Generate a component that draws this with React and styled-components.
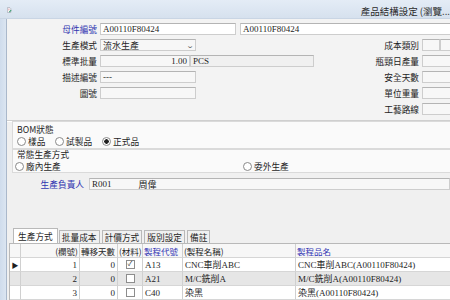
import React from "react";
import styled, { createGlobalStyle } from "styled-components";

const Global = createGlobalStyle`
  html, body { margin: 0; padding: 0; width: 450px; height: 300px; overflow: hidden; background: #f0f0f0; }
  body { font-family: "Liberation Serif", "Noto Sans CJK TC", serif; font-size: 9px; color: #1e1e1e; }
  #root { width: 450px; height: 300px; }
`;

const Win = styled.div`
  width: 450px;
  height: 300px;
  display: flex;
  flex-direction: column;
  overflow: hidden;
`;

const TitleBar = styled.div`
  height: 18px;
  flex: none;
  display: flex;
  align-items: center;
  padding-left: 7px;
  background: linear-gradient(#e4ecf6, #d6e1ee);
  border-bottom: 1px solid #c9d5e4;
`;

const Title = styled.span`
  margin-left: 349px;
  white-space: nowrap;
  font-family: "Noto Sans CJK TC", sans-serif;
  font-size: 9.5px;
  color: #2a2a2a;
  margin-top: 4px;
`;

const Body = styled.div`
  flex: 1;
  display: flex;
  min-height: 0;
`;

const Frame = styled.div`
  width: 6px;
  flex: none;
  background: linear-gradient(90deg, #cfdcec, #dbe5f1);
  border-right: 1px solid #aab8cb;
`;

const Content = styled.div`
  flex: 1;
  min-width: 0;
  display: flex;
  flex-direction: column;
  overflow: hidden;
  background: #f0f0f0;
`;

const TopPanel = styled.div`
  display: grid;
  grid-template-columns: 90px 245px 71px 60px;
  grid-auto-rows: 16px;
  column-gap: 3px;
  padding: 2px 0 3px;
  background: #f3f3f3;
  border-bottom: 1px solid #cfcfcf;
  box-shadow: 0 1px 0 #fff;
`;

const Label = styled.div`
  display: flex;
  align-items: center;
  justify-content: flex-end;
  white-space: nowrap;
  font-family: "Noto Sans CJK TC", sans-serif;
  font-size: 8.7px;
  color: ${(p) => (p.blue ? "#2f35b0" : "#1e1e1e")};
  grid-column: ${(p) => p.col || "auto"};
  grid-row: ${(p) => p.row || "auto"};
`;

const Cell = styled.div`
  display: flex;
  align-items: center;
  gap: ${(p) => p.gap || 0}px;
  grid-column: ${(p) => p.col || "auto"};
  grid-row: ${(p) => p.row || "auto"};
`;

const Field = styled.div`
  height: 12px;
  width: ${(p) => (p.w ? p.w + "px" : "auto")};
  flex: ${(p) => (p.grow ? 1 : "none")};
  display: flex;
  align-items: center;
  justify-content: ${(p) => (p.right ? "flex-end" : "flex-start")};
  padding: 0 2px;
  box-sizing: border-box;
  border: 1px solid #cdcdcd;
  border-top-color: #b4b4b4;
  background: ${(p) => p.bg || "#fff"};
  white-space: nowrap;
  overflow: hidden;
`;

const Chevron = styled.span`
  margin-left: auto;
  font-size: 7px;
  color: #555;
  transform: scaleX(1.4);
`;

const Group = styled.div`
  margin-left: 5px;
  padding: ${(p) => p.pad || "3px 4px 2px"};
  background: #fafafa;
  border: 1px solid #dadada;
  border-right: none;
  font-family: "Noto Sans CJK TC", sans-serif;
  font-size: 8.7px;
`;

const GroupTitle = styled.div`
  height: ${(p) => p.h || 11}px;
  line-height: ${(p) => p.h || 11}px;
`;

const RadioRow = styled.div`
  display: flex;
  align-items: center;
  height: 12px;
`;

const Radio = styled.span`
  display: flex;
  align-items: center;
  gap: 2px;
  width: ${(p) => p.w}px;
  flex: none;
  white-space: nowrap;
  &::before {
    content: "";
    width: 7px;
    height: 7px;
    border-radius: 50%;
    border: 1px solid #8a8a8a;
    background: ${(p) =>
      p.on ? "radial-gradient(circle, #222 0 2px, #fff 2.5px)" : "#fff"};
  }
`;

const OwnerRow = styled.div`
  display: flex;
  align-items: center;
  gap: 5px;
  height: 16px;
  margin-top: 3px;
`;

const OwnerLabel = styled(Label)`
  width: 77px;
  flex: none;
`;

const OwnerName = styled.span`
  margin-left: 27px;
  font-family: "Noto Sans CJK TC", sans-serif;
`;

const Tabs = styled.div`
  margin-top: auto;
  display: flex;
  align-items: flex-end;
  padding-left: 6px;
  height: 15px;
  font-family: "Noto Sans CJK TC", sans-serif;
  font-size: 8.7px;
`;

const Tab = styled.div`
  height: ${(p) => (p.active ? 15 : 13)}px;
  padding: 0 ${(p) => (p.active ? 4 : 2)}px;
  margin-right: ${(p) => (p.active ? 1 : 2)}px;
  display: flex;
  align-items: center;
  box-sizing: border-box;
  border: 1px solid #b9b9b9;
  border-bottom: none;
  background: ${(p) => (p.active ? "#fff" : "#f0f0f0")};
  white-space: nowrap;
`;

const Grid = styled.div`
  display: grid;
  grid-template-columns: 11px 59px 38px 25px 40px 113px 200px;
  grid-auto-rows: 14px;
  margin-left: 2px;
  border-top: 1px solid #b9b9b9;
  border-left: 1px solid #b9b9b9;
  background: #fff;
`;

const GCell = styled.div`
  display: flex;
  align-items: center;
  justify-content: ${(p) => p.align || "flex-start"};
  padding: 0 ${(p) => (p.head ? 1 : 2)}px;
  border-right: 1px solid #d0d0d0;
  border-bottom: 1px solid #d6d6d6;
  background: ${(p) => (p.head ? "#f7f7f7" : p.alt ? "#e6e6e6" : "#fff")};
  color: ${(p) => (p.blue ? "#3236b4" : "#1e1e1e")};
  white-space: nowrap;
  overflow: hidden;
  font-size: ${(p) => (p.head ? 8.5 : 9)}px;
  font-family: ${(p) =>
    p.head ? '"Noto Sans CJK TC", sans-serif' : '"Liberation Serif", "Noto Sans CJK TC", serif'};
`;

const Check = styled.span`
  width: 7px;
  height: 7px;
  border: 1px solid #8d8d8d;
  background: #fff;
  font-size: 7px;
  line-height: 7px;
  text-align: center;
  color: #333;
`;

function DocIcon() {
  return (
    <svg width="11" height="12" viewBox="0 0 11 12" style={{ marginTop: 2 }}>
      <path d="M1 0.5h5.5l2.5 2.5v8.5h-8z" fill="#fff" stroke="#7b7b8c" />
      <path d="M2.5 4h4M2.5 6h3" stroke="#d66a7a" strokeWidth="1" />
      <path d="M5 9.5l4-4 1.5 1.5-4 4h-1.5z" fill="#2e9a6a" />
    </svg>
  );
}

const rows = [
  { n: 1, code: "A13", name: "CNC車削ABC", full: "CNC車削ABC(A00110F80424)", on: true },
  { n: 2, code: "A21", name: "M/C銑削A", full: "M/C銑削A(A00110F80424)", on: false },
  { n: 3, code: "C40", name: "染黑", full: "染黑(A00110F80424)", on: false },
];

export default function App() {
  return (
    <Win>
      <Global />
      <TitleBar>
        <DocIcon />
        <Title>產品結構設定 (瀏覽...</Title>
      </TitleBar>
      <Body>
        <Frame />
        <Content>
          <TopPanel>
            <Label blue row="1">母件編號</Label>
            <Cell col="2 / 5" row="1" gap={4}>
              <Field w={136}>A00110F80424</Field>
              <Field grow>A00110F80424</Field>
            </Cell>

            <Label row="2">生產模式</Label>
            <Cell row="2">
              <Field w={96} bg="#f7f7f7" style={{ fontFamily: '"Noto Sans CJK TC", sans-serif' }}>
                流水生產<Chevron>⌄</Chevron>
              </Field>
            </Cell>
            <Label col="3" row="2">成本類別</Label>
            <Cell col="4" row="2">
              <Field w={18} bg="#f7f7f7" />
              <Field w={40} bg="#f7f7f7" />
            </Cell>

            <Label row="3">標準批量</Label>
            <Cell row="3">
              <Field w={90} right bg="#f7f7f7">1.00</Field>
              <Field w={124} bg="#f0f0f0">PCS</Field>
            </Cell>
            <Label col="3" row="3">瓶頸日產量</Label>
            <Cell col="4" row="3"><Field grow bg="#f7f7f7" /></Cell>

            <Label row="4">描述編號</Label>
            <Cell row="4"><Field w={96} bg="#f7f7f7">---</Field></Cell>
            <Label col="3" row="4">安全天數</Label>
            <Cell col="4" row="4"><Field grow bg="#f7f7f7" /></Cell>

            <Label row="5">圖號</Label>
            <Cell row="5"><Field w={96} bg="#f7f7f7" /></Cell>
            <Label col="3" row="5">單位重量</Label>
            <Cell col="4" row="5"><Field grow bg="#f7f7f7" /></Cell>

            <Label col="3" row="6">工藝路線</Label>
            <Cell col="4" row="6"><Field grow bg="#f7f7f7" /></Cell>
          </TopPanel>

          <Group pad="2px 4px 1px">
            <GroupTitle>BOM狀態</GroupTitle>
            <RadioRow>
              <Radio w={38}>樣品</Radio>
              <Radio w={47}>試製品</Radio>
              <Radio w={60} on>正式品</Radio>
            </RadioRow>
          </Group>
          <Group pad="0 2px 0">
            <GroupTitle h={10} style={{ paddingLeft: 2 }}>常態生產方式</GroupTitle>
            <RadioRow>
              <Radio w={228}>廠內生產</Radio>
              <Radio w={60}>委外生產</Radio>
            </RadioRow>
          </Group>

          <OwnerRow>
            <OwnerLabel blue>生產負責人</OwnerLabel>
            <Field grow bg="#f7f7f7">
              R001<OwnerName>周偉</OwnerName>
            </Field>
          </OwnerRow>

          <Tabs>
            <Tab active>生產方式</Tab>
            <Tab>批量成本</Tab>
            <Tab>計價方式</Tab>
            <Tab>版別設定</Tab>
            <Tab>備註</Tab>
          </Tabs>
          <Grid>
            <GCell head />
            <GCell head align="flex-end">(欄號)</GCell>
            <GCell head>轉移天數</GCell>
            <GCell head>(材料)</GCell>
            <GCell head blue>製程代號</GCell>
            <GCell head>(製程名稱)</GCell>
            <GCell head blue>製程品名</GCell>
            {rows.map((r, i) => (
              <React.Fragment key={r.n}>
                <GCell alt={i === 1} align="center" style={{ fontSize: 7 }}>
                  {i === 0 ? "▶" : ""}
                </GCell>
                <GCell alt={i === 1} align="flex-end">{r.n}</GCell>
                <GCell alt={i === 1} align="flex-end">0</GCell>
                <GCell alt={i === 1} align="center">
                  <Check>{r.on ? "✓" : ""}</Check>
                </GCell>
                <GCell alt={i === 1}>{r.code}</GCell>
                <GCell alt={i === 1}>{r.name}</GCell>
                <GCell alt={i === 1}>{r.full}</GCell>
              </React.Fragment>
            ))}
          </Grid>
        </Content>
      </Body>
    </Win>
  );
}
